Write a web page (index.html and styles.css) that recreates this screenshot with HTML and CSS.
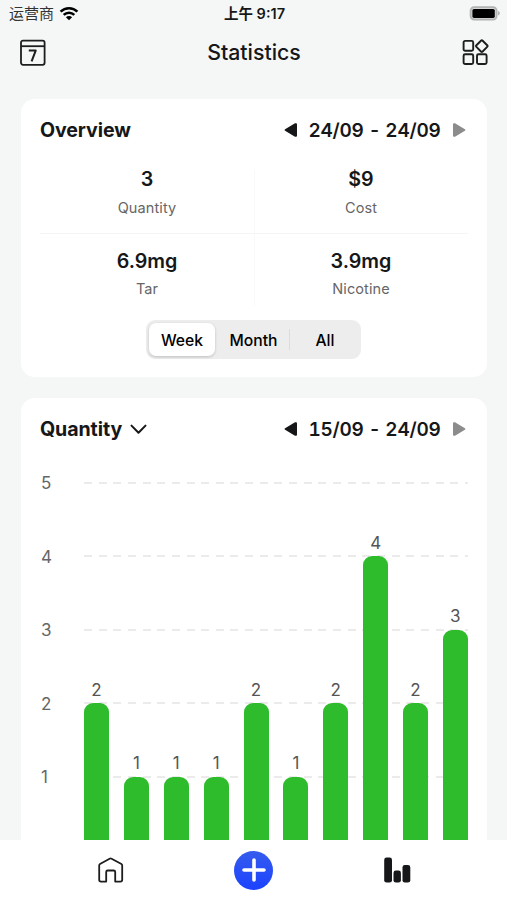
FILE: index.html
```html
<!DOCTYPE html>
<html lang="en">
<head>
    <meta charset="UTF-8">
    <meta name="viewport" content="width=device-width, initial-scale=1.0">
    <title>Statistics</title>
    <link rel="stylesheet" href="styles.css">
</head>
<body>
    <div class="status-bar">
        <div class="carrier">
            <span>运营商</span>
            <svg width="20" height="15" viewBox="0 0 20 15">
                <g fill="none" stroke="#000" stroke-width="2.5">
                    <path d="M1.6 5.6 A12 12 0 0 1 18.4 5.6"/>
                    <path d="M4.7 8.9 A7.6 7.6 0 0 1 15.3 8.9"/>
                </g>
                <path d="M10 14.3 L6.9 11.2 A4.4 4.4 0 0 1 13.1 11.2 Z"/>
            </svg>
        </div>
        <div class="clock">上午 9:17</div>
        <div class="battery">
            <svg width="31" height="15" viewBox="0 0 31 15">
                <rect x="1.6" y="1.2" width="26" height="12.4" rx="3.6" fill="#d5d6d6" stroke="#b2b3b3" stroke-width="1.8"/>
                <rect x="3.4" y="2.9" width="22.4" height="9" rx="1.6" fill="#000"/>
                <path d="M29 5 Q30.8 5.6 30.8 7.3 Q30.8 9 29 9.6 Z" fill="#b2b3b3"/>
            </svg>
        </div>
    </div>

    <header class="header">
        <svg width="26" height="27" viewBox="0 0 26 27" fill="none" stroke="#1c1d1e" stroke-width="1.8" stroke-linejoin="round">
            <rect x="1" y="1.6" width="23.6" height="24.2" rx="2"/>
            <path d="M1 7.2 H24.6"/>
            <path d="M8.8 11.6 H15.7 L11.6 22.4" stroke-width="2"/>
        </svg>
        <h1>Statistics</h1>
        <svg width="27" height="27" viewBox="0 0 27 27" fill="none" stroke="#1c1d1e" stroke-width="1.9" stroke-linejoin="round">
            <rect x="1.6" y="1.9" width="9.6" height="9.8" rx="1.5"/>
            <rect x="1.6" y="15.2" width="9.6" height="9.8" rx="1.5"/>
            <rect x="15" y="15.2" width="9.6" height="9.8" rx="1.5"/>
            <rect x="15.4" y="2.7" width="8.8" height="8.8" rx="1.2" transform="rotate(45 19.8 7.1)"/>
        </svg>
    </header>

    <main class="content">
        <section class="card overview">
            <div class="card-head">
                <h2>Overview</h2>
                <div class="range">
                    <svg width="14" height="16" viewBox="0 0 14 16"><path d="M1.6 8 L11.5 2.2 Q12 2 12 2.5 V13.5 Q12 14 11.5 13.8 Z" fill="#161718" stroke="#161718" stroke-width="2" stroke-linejoin="round"/></svg>
                    <span>24/09 - 24/09</span>
                    <svg width="14" height="16" viewBox="0 0 14 16"><path d="M12.4 8 L2.5 2.2 Q2 2 2 2.5 V13.5 Q2 14 2.5 13.8 Z" fill="#8c8c8c" stroke="#8c8c8c" stroke-width="2" stroke-linejoin="round"/></svg>
                </div>
            </div>
            <div class="stats">
                <div class="stat"><b>3</b><span>Quantity</span></div>
                <div class="stat"><b>$9</b><span>Cost</span></div>
                <div class="stat low"><b>6.9mg</b><span>Tar</span></div>
                <div class="stat low"><b>3.9mg</b><span>Nicotine</span></div>
            </div>
            <div class="segmented">
                <div class="segment active">Week</div>
                <div class="segment">Month</div>
                <div class="segment last">All</div>
            </div>
        </section>

        <section class="card">
            <div class="card-head">
                <h2>Quantity
                    <svg width="17" height="11" viewBox="0 0 17 11" fill="none" stroke="#161718" stroke-width="2" stroke-linecap="round" stroke-linejoin="round"><path d="M1.5 1.6 L8.5 8.8 L15.5 1.6"/></svg>
                </h2>
                <div class="range">
                    <svg width="14" height="16" viewBox="0 0 14 16"><path d="M1.6 8 L11.5 2.2 Q12 2 12 2.5 V13.5 Q12 14 11.5 13.8 Z" fill="#161718" stroke="#161718" stroke-width="2" stroke-linejoin="round"/></svg>
                    <span>15/09 - 24/09</span>
                    <svg width="14" height="16" viewBox="0 0 14 16"><path d="M12.4 8 L2.5 2.2 Q2 2 2 2.5 V13.5 Q2 14 2.5 13.8 Z" fill="#8c8c8c" stroke="#8c8c8c" stroke-width="2" stroke-linejoin="round"/></svg>
                </div>
            </div>
            <div class="chart">
                <div class="grid">
                    <div class="grid-row"><span>5</span><i></i></div>
                    <div class="grid-row"><span>4</span><i></i></div>
                    <div class="grid-row"><span>3</span><i></i></div>
                    <div class="grid-row"><span>2</span><i></i></div>
                    <div class="grid-row"><span>1</span><i></i></div>
                </div>
                <div class="bars">
                    <div class="bar" style="height: 40%"><span>2</span></div>
                    <div class="bar" style="height: 20%"><span>1</span></div>
                    <div class="bar" style="height: 20%"><span>1</span></div>
                    <div class="bar" style="height: 20%"><span>1</span></div>
                    <div class="bar" style="height: 40%"><span>2</span></div>
                    <div class="bar" style="height: 20%"><span>1</span></div>
                    <div class="bar" style="height: 40%"><span>2</span></div>
                    <div class="bar" style="height: 80%"><span>4</span></div>
                    <div class="bar" style="height: 40%"><span>2</span></div>
                    <div class="bar" style="height: 60%"><span>3</span></div>
                </div>
            </div>
        </section>
    </main>

    <nav class="tab-bar">
        <div class="tab">
            <svg width="28" height="28" viewBox="0 0 28 28" fill="none" stroke="#1c1d1e" stroke-width="1.8" stroke-linejoin="round">
                <path d="M2.2 9.4 Q2.2 8.5 3 8 L12.6 2.7 Q13.6 2.2 14.6 2.7 L24.4 8 Q25.2 8.5 25.2 9.4 V23.8 Q25.2 25.6 23.4 25.6 H18.2 V16 Q18.2 14.5 16.7 14.5 H10.7 Q9.2 14.5 9.2 16 V25.6 H4 Q2.2 25.6 2.2 23.8 Z"/>
            </svg>
        </div>
        <div class="tab">
            <div class="add">
                <svg width="24" height="24" viewBox="0 0 24 24" stroke="#fff" stroke-width="3.6" stroke-linecap="round"><path d="M12 2 V22 M2 12 H22"/></svg>
            </div>
        </div>
        <div class="tab">
            <svg width="28" height="28" viewBox="0 0 28 28" fill="#161718">
                <rect x="1.2" y="1.6" width="7.8" height="25" rx="2.4"/>
                <rect x="10.5" y="14.6" width="7.4" height="12" rx="2.4"/>
                <rect x="19.5" y="9" width="7.8" height="17.6" rx="2.4"/>
            </svg>
        </div>
    </nav>
</body>
</html>
```
FILE: styles.css
```css
* {
    box-sizing: border-box;
}
html, body {
    height: 100%;
    margin: 0;
}
body {
    display: flex;
    flex-direction: column;
    overflow: hidden;
    background-color: #f5f7f7;
    color: #161718;
    font-family: Inter, "Noto Sans CJK SC", sans-serif;
}
svg {
    display: block;
    flex: none;
}
h1, h2 {
    margin: 0;
}
.status-bar {
    display: grid;
    grid-template-columns: 1fr auto 1fr;
    align-items: center;
    height: 27px;
    padding: 0 7px 0 9px;
    font-size: 15px;
    line-height: 20px;
}
.carrier {
    display: flex;
    align-items: center;
    gap: 5px;
    color: #333;
}
.clock {
    font-size: 14.5px;
    font-weight: 600;
}
.battery {
    justify-self: end;
}
.header {
    display: flex;
    justify-content: space-between;
    align-items: center;
    height: 50px;
    padding: 0 18px 0 20px;
}
.header h1 {
    font-size: 21.3px;
    font-weight: 500;
}
.content {
    flex: 1;
    min-height: 0;
    overflow: hidden;
    padding: 22px 20px 0 21px;
}
.card {
    background-color: #fff;
    border-radius: 14px;
    padding: 17px 19px 0 19px;
    height: 470px;
}
.overview {
    height: 278px;
    margin-bottom: 21px;
}
.card-head {
    display: flex;
    justify-content: space-between;
    align-items: center;
    height: 28px;
}
.card-head h2 {
    display: flex;
    align-items: center;
    gap: 8px;
    font-size: 19.6px;
    font-weight: 650;
    letter-spacing: -0.1px;
}
.range {
    display: flex;
    align-items: center;
    margin-right: 2px;
    font-size: 19px;
    font-weight: 600;
    font-variant-numeric: tabular-nums;
}
.range span {
    width: 154px;
    padding-right: 1px;
    text-align: center;
    white-space: nowrap;
    letter-spacing: -0.25px;
}
.stats {
    display: grid;
    grid-template-columns: 1fr 1fr;
    grid-template-rows: 72px 72px;
    row-gap: 9px;
    margin-top: 18px;
    background: linear-gradient(#f4f5f5, #f4f5f5) 0 71px / 100% 1px no-repeat,
        linear-gradient(#f8f9f9, #f8f9f9) 50% 8px / 1px 136px no-repeat;
}
.stat {
    display: flex;
    flex-direction: column;
    align-items: center;
    gap: 5px;
    padding-top: 4px;
}
.stat.low {
    gap: 4px;
    padding-top: 5px;
}
.stat b {
    font-size: 19.7px;
    font-weight: 600;
    line-height: 26px;
}
.stat span {
    font-size: 14.5px;
    line-height: 22px;
    color: #666;
    letter-spacing: 0.1px;
}
.segmented {
    display: flex;
    width: 215px;
    height: 39px;
    margin: 5px auto 0 106px;
    padding: 3px;
    border-radius: 9px;
    background-color: #ededed;
    font-size: 15.7px;
    font-weight: 500;
    line-height: 21px;
    color: #000;
}
.segment {
    display: flex;
    flex: 1;
    align-items: center;
    justify-content: center;
    padding-top: 1px;
}
.segment.active {
    flex: none;
    width: 66px;
    margin-right: 3px;
    border-radius: 7px;
    background-color: #fff;
    box-shadow: 0 1px 3px rgba(0, 0, 0, 0.2);
}
.segment.last {
    flex: none;
    width: 69px;
    padding-left: 3px;
    background: linear-gradient(#dcdcdc, #dcdcdc) 0 50% / 1px 21px no-repeat;
}
.chart {
    display: grid;
    height: 368px;
    margin-top: 39.5px;
}
.grid, .bars {
    grid-area: 1 / 1;
}
.grid-row {
    display: flex;
    height: 73.6px;
}
.grid-row span {
    width: 44px;
    margin-top: -11.5px;
    padding-left: 1px;
    font-size: 17px;
    line-height: 24px;
    color: #666;
}
.grid-row i {
    flex: 1;
    height: 2px;
    margin-top: -1px;
    background: repeating-linear-gradient(90deg, #ebebeb 0 8px, transparent 8px 14.65px);
}
.bars {
    display: flex;
    justify-content: space-between;
    align-items: flex-end;
    margin-left: 44px;
}
.bar {
    width: 25px;
    border-radius: 9px 9px 0 0;
    background-color: #2fbc2c;
    font-size: 17px;
    line-height: 24px;
    color: #555;
    text-align: center;
}
.bar span {
    display: block;
    margin-top: -25.5px;
}
.tab-bar {
    display: flex;
    height: 60px;
    padding: 0 38px 0 39px;
    background-color: #fff;
}
.tab {
    display: flex;
    flex: 1;
    align-items: center;
    justify-content: center;
}
.add {
    display: flex;
    align-items: center;
    justify-content: center;
    width: 39px;
    height: 39px;
    border-radius: 50%;
    background: linear-gradient(#355ced, #1c42ff);
}
```
